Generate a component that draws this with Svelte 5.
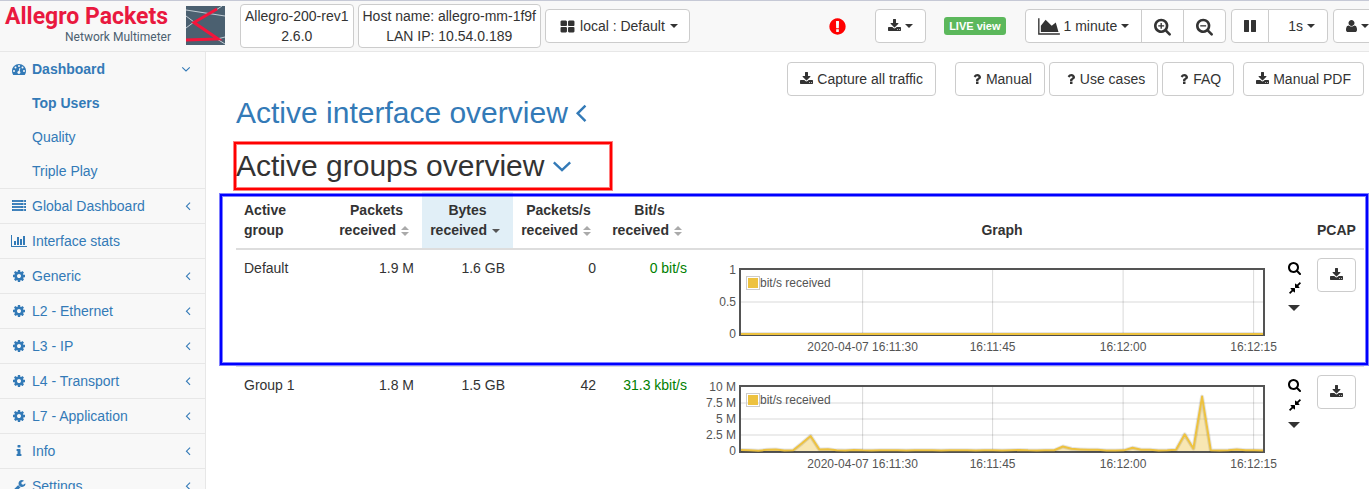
<script>
  const icons = {
    search: 'M1216 832q0-185-131.5-316.5t-316.5-131.5-316.5 131.5-131.5 316.5 131.5 316.5 316.5 131.5 316.5-131.5 131.5-316.5zm512 832q0 52-38 90t-90 38q-54 0-90-38l-343-342q-179 124-399 124-143 0-273.5-55.5t-225-150-150-225-55.5-273.5 55.5-273.5 150-225 225-150 273.5-55.5 273.5 55.5 225 150 150 225 55.5 273.5q0 220-124 399l343 343q37 37 37 90z',
    cog: 'M1152 896q0-106-75-181t-181-75-181 75-75 181 75 181 181 75 181-75 75-181zm512-109v222q0 12-8 23t-20 13l-185 28q-19 54-39 91 35 50 107 138 10 12 10 25t-9 23q-27 37-99 108t-94 71q-12 0-26-9l-138-108q-44 23-91 38-16 136-29 186-7 28-36 28h-222q-14 0-24.5-8.5t-11.5-21.5l-28-184q-49-16-90-37l-141 107q-10 9-25 9-14 0-25-11-126-114-165-168-7-10-7-23 0-12 8-23 15-21 51-66.5t54-70.5q-27-50-41-99l-183-27q-13-2-21-12.5t-8-23.5v-222q0-12 8-23t19-13l186-28q14-46 39-92-40-57-107-138-10-12-10-24 0-10 9-23 26-36 98.5-107.5t94.5-71.5q13 0 26 10l138 107q44-23 91-38 16-136 29-186 7-28 36-28h222q14 0 24.5 8.5t11.5 21.5l28 184q49 16 90 37l142-107q9-9 24-9 13 0 25 10 129 119 165 170 7 8 7 22 0 12-8 23-15 21-51 66.5t-54 70.5q26 50 41 98l183 28q13 2 21 12.5t8 23.5z',
    download: 'M1344 1344q0-26-19-45t-45-19-45 19-19 45 19 45 45 19 45-19 19-45zm256 0q0-26-19-45t-45-19-45 19-19 45 19 45 45 19 45-19 19-45zm128-224v320q0 40-28 68t-68 28h-1472q-40 0-68-28t-28-68v-320q0-40 28-68t68-28h465l135 136q58 56 136 56t136-56l136-136h464q40 0 68 28t28 68zm-325-569q17 41-14 70l-448 448q-18 19-45 19t-45-19l-448-448q-31-29-14-70 17-39 59-39h256v-448q0-26 19-45t45-19h256q26 0 45 19t19 45v448h256q42 0 59 39z',
    alert: 'M896 128q209 0 385.5 103t279.5 279.5 103 385.5-103 385.5-279.5 279.5-385.5 103-385.5-103-279.5-279.5-103-385.5 103-385.5 279.5-279.5 385.5-103zm128 1247v-190q0-14-9-23.5t-22-9.5h-192q-13 0-23 10t-10 23v190q0 13 10 23t23 10h192q13 0 22-9.5t9-23.5zm-2-344l18-621q0-12-10-18-10-8-24-8h-220q-14 0-24 8-10 6-10 18l17 621q0 10 10 17.5t24 7.5h185q14 0 23.5-7.5t10.5-17.5z',
    area: 'M2048 1536v128h-2048v-1536h128v1408h1920zm-384-1024l256 896h-1664v-576l448-576 576 576z',
    bars: 'M640 896v512h-256v-512h256zm384-512v1024h-256v-1024h256zm1024 1152v128h-2048v-1536h128v1408h1920zm-640-896v768h-256v-768h256zm384-384v1152h-256v-1152h256z',
    user: 'M1600 1405q0 120-73 189.5t-194 69.5h-874q-121 0-194-69.5t-73-189.5q0-53 3.5-103.5t14-109 26.5-108.5 43-97.5 62-81 85.5-53.5 111.5-20q9 0 42 21.5t74.5 48 108 48 133.5 21.5 133.5-21.5 108-48 74.5-48 42-21.5q61 0 111.5 20t85.5 53.5 62 81 43 97.5 26.5 108.5 14 109 3.5 103.5zm-320-893q0 159-112.5 271.5t-271.5 112.5-271.5-112.5-112.5-271.5 112.5-271.5 271.5-112.5 271.5 112.5 112.5 271.5z',
    compress: 'M896 960v448q0 26-19 45t-45 19-45-19l-144-144-332 332q-10 10-23 10t-23-10l-114-114q-10-10-10-23t10-23l332-332-144-144q-19-19-19-45t19-45 45-19h448q26 0 45 19t19 45zm755-672q0 13-10 23l-332 332 144 144q19 19 19 45t-19 45-45 19h-448q-26 0-45-19t-19-45v-448q0-26 19-45t45-19 45 19l144 144 332-332q10-10 23-10t23 10l114 114q10 10 10 23z',
    question: 'M1088 1256v240q0 16-12 28t-28 12h-240q-16 0-28-12t-12-28v-240q0-16 12-28t28-12h240q16 0 28 12t12 28zm316-600q0 54-15.5 101t-35 76.5-55 59.5-57.5 43.5-61 35.5q-41 23-68.5 65t-27.5 67q0 17-12 32.5t-28 15.5h-240q-15 0-25.5-18.5t-10.5-37.5v-45q0-83 65-156.5t143-108.5q59-27 84-56t25-76q0-42-46.5-74t-107.5-32q-65 0-108 29-35 25-107 115-13 16-31 16-12 0-25-8l-164-125q-13-10-15.5-25t5.5-28q160-266 464-266 80 0 161 31t146 83 106 127.5 41 158.5z',
    info: 'M1216 1344v128q0 26-19 45t-45 19h-512q-26 0-45-19t-19-45v-128q0-26 19-45t45-19h64v-384h-64q-26 0-45-19t-19-45v-128q0-26 19-45t45-19h384q26 0 45 19t19 45v576h64q26 0 45 19t19 45zm-128-1152v192q0 26-19 45t-45 19h-256q-26 0-45-19t-19-45v-192q0-26 19-45t45-19h256q26 0 45 19t19 45z',
    wrench: 'M448 1472q0-26-19-45t-45-19-45 19-19 45 19 45 45 19 45-19 19-45zm644-420l-682 682q-37 37-90 37-52 0-91-37l-106-108q-38-36-38-90 0-53 38-91l681-681q39 98 114.5 173.5t173.5 114.5zm634-435q0 39-23 106-47 134-164.5 217.5t-258.5 83.5q-185 0-316.5-131.5t-131.5-316.5 131.5-316.5 316.5-131.5q58 0 121.5 16.5t107.5 46.5q16 11 16 28t-16 28l-293 169v224l193 107q5-3 79-48.5t135.5-81 70.5-35.5q15 0 23.5 10t8.5 25z',
    pause: 'M1664 192v1408q0 26-19 45t-45 19h-512q-26 0-45-19t-19-45v-1408q0-26 19-45t45-19h512q26 0 45 19t19 45zm-896 0v1408q0 26-19 45t-45 19h-512q-26 0-45-19t-19-45v-1408q0-26 19-45t45-19h512q26 0 45 19t19 45z',
    grid: 'M832 1088v384q0 52-38 90t-90 38h-512q-52 0-90-38t-38-90v-384q0-52 38-90t90-38h512q52 0 90 38t38 90zm0-768v384q0 52-38 90t-90 38h-512q-52 0-90-38t-38-90v-384q0-52 38-90t90-38h512q52 0 90 38t38 90zm896 768v384q0 52-38 90t-90 38h-512q-52 0-90-38t-38-90v-384q0-52 38-90t90-38h512q52 0 90 38t38 90zm0-768v384q0 52-38 90t-90 38h-512q-52 0-90-38t-38-90v-384q0-52 38-90t90-38h512q52 0 90 38t38 90z',
    dash: 'M1792 1152q0 261-141 483-19 29-54 29h-1402q-35 0-54-29-141-221-141-483 0-182 71-348t191-286 286-191 348-71 348 71 286 191 191 286 71 348z',
    server: 'M0 128h1792v256h-1792zM0 512h1792v256h-1792zM0 896h1792v256h-1792zM0 1280h1792v256h-1792z'
  };

  // horizontal extent of the glyphs that do not fill the 1792-unit box
  const extents = {
    area: [0, 2048],
    bars: [0, 2048],
    search: [64, 1664],
    download: [64, 1664],
    pause: [128, 1536],
    user: [192, 1408]
  };

  const menu = [
    { icon: 'server', label: 'Global Dashboard', open: true },
    { icon: 'bars', label: 'Interface stats', open: false },
    { icon: 'cog', label: 'Generic', open: true },
    { icon: 'cog', label: 'L2 - Ethernet', open: true },
    { icon: 'cog', label: 'L3 - IP', open: true },
    { icon: 'cog', label: 'L4 - Transport', open: true },
    { icon: 'cog', label: 'L7 - Application', open: true },
    { icon: 'info', label: 'Info', open: true },
    { icon: 'wrench', label: 'Settings', open: true }
  ];

  const columns = [
    ['Packets', 'received'],
    ['Bytes', 'received'],
    ['Packets/s', 'received'],
    ['Bit/s', 'received']
  ];

  // one sample per second, in Mbit/s
  const traffic = [
    0.15, 0.1, 0.05, 0.18, 0.22, 0.08, 0.12, 1.2, 2.35, 0.25, 0.28, 0.1, 0.08, 0.15, 0.1, 0.08,
    0.1, 0.1, 0.12, 0.06, 0.12, 0.12, 0.1, 0.06, 0.1, 0.12, 0.1, 0.06, 0.1, 0.12, 0.06, 0.1,
    0.16, 0.1, 0.08, 0.1, 0.12, 0.7, 0.35, 0.25, 0.18, 0.2, 0.08, 0.06, 0.1, 0.5, 0.2, 0.2, 0.08,
    0.12, 0.2, 2.6, 0.4, 8.5, 0.1, 0.08, 0.1, 0.25, 0.12, 0.1, 0.06
  ];

  const rows = [
    { name: 'Default', cells: ['1.9 M', '1.6 GB', '0'], rate: '0 bit/s', ticks: ['1', '0.5', '0'], data: traffic.map(() => 0) },
    { name: 'Group 1', cells: ['1.8 M', '1.5 GB', '42'], rate: '31.3 kbit/s', ticks: ['10 M', '7.5 M', '5 M', '2.5 M', '0'], data: traffic }
  ];

  const times = [
    { at: 23.3, text: '2020-04-07 16:11:30' },
    { at: 48.2, text: '16:11:45' },
    { at: 73.2, text: '16:12:00' },
    { at: 98.2, text: '16:12:15' }
  ];

  const line = (data) => data.map((v, i) => `${((i * 100) / (data.length - 1)).toFixed(2)},${(100 - v * 10).toFixed(2)}`).join(' ');
</script>

{#snippet icon(name, size = 14)}
  {@const box = extents[name] ?? [0, 1792]}
  <svg class="icon" width={Math.round((size * box[1]) / 1792)} height={size} viewBox="{box[0]} 0 {box[1]} 1792" aria-hidden="true">
    <path d={icons[name]} fill="currentColor" />
    {#if name === 'dash'}
      <g fill="#f8f8f8">
        <circle cx="256" cy="1152" r="128" /><circle cx="448" cy="704" r="128" />
        <circle cx="896" cy="512" r="128" /><circle cx="1344" cy="704" r="128" />
        <circle cx="1536" cy="1152" r="128" /><circle cx="885" cy="1344" r="190" />
        <path d="M830 1260L945 790q20-48 70-38t45 66L950 1290z" />
      </g>
    {:else if name === 'server'}
      <g fill="#f8f8f8">
        <path d="M128 224h1024v64H128zM128 608h1024v64H128zM128 992h1024v64H128zM128 1376h1024v64H128z" opacity=".3" />
        <path d="M1408 192h160v128h-160zM1408 576h160v128h-160zM1408 960h160v128h-160zM1408 1344h160v128h-160z" />
      </g>
    {/if}
  </svg>
{/snippet}

{#snippet zoomIcon(plus)}
  <svg class="icon" width="17" height="19" viewBox="64 0 1664 1792" aria-hidden="true">
    <path d={icons.search} fill="currentColor" />
    <path d={plus ? 'M480 768h224V544h128v224h224v128H832v224H704V896H480z' : 'M480 768h576v128H480z'} fill="currentColor" />
  </svg>
{/snippet}

{#snippet angle(dir, size)}
  <svg class="icon" width={size} height={size} viewBox="0 0 14 14" fill="none" stroke="currentColor" stroke-width="1.3" aria-hidden="true">
    <path d={dir === 'left' ? 'M9.4 3L5.2 7.2L9.4 11.4' : 'M2.6 5L7 9.2L11.4 5'} />
  </svg>
{/snippet}

<div class="app">
  <header>
    <a class="brand" href="#home">
      <span class="brand-text">
        <span class="brand-name">Allegro Packets</span>
        <span class="brand-sub">Network Multimeter</span>
      </span>
      <svg width="39" height="39" viewBox="0 0 39 39" aria-hidden="true">
        <rect width="39" height="39" fill="#4b6070" />
        <g fill="none" stroke="#c3cdd4" stroke-width="1">
          <path d="M0 4L39 10M30 4L36 0M0 10L8 16L0 22M31 33L39 38M31 33L39 31" />
        </g>
        <path d="M31 3L8 16.500L32 33L0 34" fill="none" stroke="#f5153b" stroke-width="3" />
      </svg>
    </a>
    <div class="facts">
      <div class="fact">Allegro-200-rev1<br />2.6.0</div>
      <div class="fact">Host name: allegro-mm-1f9f<br />LAN IP: 10.54.0.189</div>
      <button class="btn scope">{@render icon('grid', 15)}<span>local : Default</span><i class="caret"></i></button>
    </div>
    <div class="tools">
      <span class="alert">{@render icon('alert', 19)}</span>
      <button class="btn capture" aria-label="Capture">{@render icon('download')}<i class="caret"></i></button>
      <span class="live">LIVE view</span>
      <div class="group">
        <button class="btn">{@render icon('area', 19)}<span>1 minute</span><i class="caret"></i></button>
        <button class="btn" aria-label="Zoom in">{@render zoomIcon(true)}</button>
        <button class="btn" aria-label="Zoom out">{@render zoomIcon(false)}</button>
      </div>
      <div class="group">
        <button class="btn" aria-label="Pause">{@render icon('pause')}</button>
        <button class="btn interval"><span>1s</span><i class="caret"></i></button>
      </div>
      <button class="btn" aria-label="Account">{@render icon('user')}<i class="caret"></i></button>
    </div>
  </header>

  <div class="body">
    <nav>
      <ul>
        <li>
          <a class="strong" href="#dashboard"><span class="fw">{@render icon('dash')}</span><span class="label">Dashboard</span>{@render angle('down', 12)}</a>
          <ul class="sub">
            <li><a class="strong" href="#top-users">Top Users</a></li>
            <li><a href="#quality">Quality</a></li>
            <li><a href="#triple-play">Triple Play</a></li>
          </ul>
        </li>
        {#each menu as item}
          <li>
            <a href="#{item.icon}"><span class="fw">{@render icon(item.icon)}</span><span class="label">{item.label}</span>{#if item.open}{@render angle('left', 12)}{/if}</a>
          </li>
        {/each}
      </ul>
    </nav>

    <main>
      <div class="actions">
        <button class="btn">{@render icon('download')}<span>Capture all traffic</span></button>
        <div class="help">
          {#each ['Manual', 'Use cases', 'FAQ'] as label}
            <button class="btn tight"><span class="fw">{@render icon('question')}</span><span>{label}</span></button>
          {/each}
        </div>
        <button class="btn">{@render icon('download')}<span>Manual PDF</span></button>
      </div>

      <h2><a href="#interfaces">Active interface overview{@render angle('left', 26)}</a></h2>
      <h2 class="marked">Active groups overview<a href="#groups" aria-label="Collapse">{@render angle('down', 26)}</a></h2>

      <div class="table-wrap">
        <table>
          <thead>
            <tr>
              <th class="name">Active<br />group</th>
              {#each columns as [top, bottom], i}
                <th class="num" class:sorted={i === 1}>
                  {top}<br />{bottom}
                  <svg class="sort" width="14" height="12" viewBox="0 0 14 12" aria-hidden="true">
                    {#if i === 1}
                      <path d="M1 4h8l-4 4z" fill="#555" />
                    {:else}
                      <path d="M1 5l4-4 4 4zM1 7h8l-4 4z" fill="#aaa" />
                    {/if}
                  </svg>
                </th>
              {/each}
              <th class="graph">Graph</th>
              <th class="pcap">PCAP</th>
            </tr>
          </thead>
          <tbody>
            {#each rows as row}
              <tr>
                <td>{row.name}</td>
                {#each row.cells as cell}<td class="value">{cell}</td>{/each}
                <td class="value rate">{row.rate}</td>
                <td>
                  <div class="chart">
                    <div class="y-axis">{#each row.ticks as t}<span>{t}</span>{/each}</div>
                    <div class="plot-col">
                      <div class="plot">
                        <svg viewBox="0 0 100 100" preserveAspectRatio="none" aria-hidden="true">
                          {#each row.ticks.slice(1, -1) as _, i}
                            {@const y = ((i + 1) * 100) / (row.ticks.length - 1)}
                            <path class="gridline" d="M0 {y}H100" />
                          {/each}
                          {#each times as t}<path class="gridline" d="M{t.at} 0V100" />{/each}
                          <polygon points="0,100 {line(row.data)} 100,100" fill="#edc240" fill-opacity=".4" />
                          <polyline class="shade" points={line(row.data)} />
                          <polyline class="series" points={line(row.data)} />
                        </svg>
                        <div class="legend"><i></i>bit/s received</div>
                      </div>
                      <div class="x-axis">{#each times as t}<span style="left: {t.at}%">{t.text}</span>{/each}</div>
                    </div>
                    <div class="chart-tools">
                      <button aria-label="Inspect">{@render icon('search')}</button>
                      <button aria-label="Shrink">{@render icon('compress')}</button>
                      <button class="more" aria-label="More"><i class="caret big"></i></button>
                    </div>
                  </div>
                </td>
                <td><button class="btn" aria-label="Download PCAP of {row.name}">{@render icon('download')}</button></td>
              </tr>
            {/each}
          </tbody>
        </table>
        <div class="highlight"></div>
      </div>
    </main>
  </div>
</div>

<style>
  :global(body) { margin: 0; background: #fff; }
  .app, .app *, .app *::after { box-sizing: border-box; }
  .app {
    height: 100vh;
    display: flex;
    flex-direction: column;
    overflow: hidden;
    color: #333;
    font: 14px/20px "Liberation Sans", Arial, sans-serif;
  }
  a { color: #337ab7; text-decoration: none; }
  ul { list-style: none; margin: 0; padding: 0; }
  .icon { display: block; flex: none; }
  button { font: inherit; color: inherit; margin: 0; }

  .btn {
    display: inline-flex;
    align-items: center;
    justify-content: center;
    gap: 4px;
    height: 34px;
    padding: 0 12px;
    border: 1px solid #ccc;
    border-radius: 4px;
    background: #fff;
    white-space: nowrap;
  }
  .tight { gap: 0; }
  .caret { border: 4px solid transparent; border-top-color: currentColor; border-bottom: 0; }
  .big { border-width: 6px 6px 0; }
  .fw { width: 18px; flex: none; display: flex; justify-content: center; }

  header {
    flex: none;
    display: flex;
    align-items: center;
    height: 52px;
    background: #f8f8f8;
    border-top: 1px solid #c6c9d6;
    border-bottom: 1px solid #e7e7e7;
  }
  .brand { display: flex; gap: 15px; padding-left: 5px; margin-right: 15px; }
  .brand-text { width: 166px; display: flex; flex-direction: column; white-space: nowrap; }
  .brand-name { font: bold 23px/22px Roboto, sans-serif; color: #e9193f; }
  .brand-sub { align-self: flex-end; font: 12px/18px Roboto, sans-serif; color: #4b6070; }
  .facts { display: flex; align-items: center; gap: 4px; }
  .fact {
    height: 44px;
    padding: 1px 4px;
    border: 1px solid #ccc;
    border-radius: 4px;
    background: #fff;
    text-align: center;
    white-space: nowrap;
  }
  .scope { padding: 0 11px 0 14px; gap: 5px; }
  .tools { display: flex; align-items: center; margin-left: auto; margin-right: -13px; }
  .alert { color: #f00; margin-right: 28px; }
  .capture { margin-right: 18px; }
  .live {
    margin-right: 19px;
    padding: 0 5px;
    border-radius: 3px;
    background: #5cb85c;
    color: #fff;
    font-size: 11px;
    font-weight: bold;
    line-height: 18px;
    white-space: nowrap;
  }
  .group { display: flex; margin-right: 5px; }
  .group .btn:not(:first-child) { margin-left: -1px; border-top-left-radius: 0; border-bottom-left-radius: 0; }
  .group .btn:not(:last-child) { border-top-right-radius: 0; border-bottom-right-radius: 0; }
  .group .interval { padding-left: 19px; }

  .body { flex: 1; min-height: 0; display: flex; }
  nav { flex: none; width: 206px; background: #f8f8f8; border-right: 1px solid #e7e7e7; overflow: hidden; }
  nav > ul > li { border-bottom: 1px solid #e7e7e7; }
  nav a { display: flex; align-items: center; gap: 4px; height: 34px; padding: 0 11px 0 10px; }
  .label { flex: 1; }
  .sub a { padding-left: 32px; }
  .strong { font-weight: bold; }
  nav a.strong { padding-right: 13px; }

  main { flex: 1; min-width: 0; padding: 10px 5px 0 30px; }
  .actions { display: flex; justify-content: flex-end; gap: 9px; }
  .help { display: flex; gap: 4px; margin-left: 10px; }
  h2 { display: flex; align-items: center; margin: 0 0 20px; font-size: 30px; line-height: 33px; font-weight: normal; }
  h2 a { display: flex; align-items: center; }
  .marked { position: relative; margin-bottom: 10px; gap: 5px; }
  .marked::after, .highlight { content: ""; position: absolute; pointer-events: none; }
  .marked::after {
    left: -2px;
    top: -7px;
    width: 378px;
    height: 48px;
    border: 2px solid #f00;
    box-shadow: 0 0 0 1px rgba(255, 0, 0, 0.5), inset 0 0 0 1px rgba(255, 0, 0, 0.5);
  }
  .table-wrap { position: relative; }
  .highlight {
    top: 2px;
    left: -16px;
    right: -4px;
    height: 171px;
    border: 2px solid #00f;
    box-shadow: 0 0 0 1px rgba(0, 0, 255, 0.5), inset 0 0 0 1px rgba(0, 0, 255, 0.5);
  }

  table { width: 100%; table-layout: fixed; border-collapse: separate; border-spacing: 0; }
  th, td { padding: 8px; vertical-align: top; text-align: left; }
  th { border-bottom: 2px solid #ddd; vertical-align: bottom; white-space: nowrap; }
  tbody tr + tr td { border-top: 1px solid #ddd; }
  .name { width: 95px; }
  .num { width: 91px; text-align: center; }
  .sorted { background: #e1eff7; background-clip: padding-box; }
  .sort { vertical-align: -2px; }
  .graph { text-align: center; }
  .pcap { width: 55px; }
  .value { text-align: right; white-space: nowrap; }
  .rate { color: #008000; }

  .chart { display: flex; height: 100px; padding-top: 10px; color: #545454; font-size: 12px; line-height: 14px; }
  .y-axis {
    width: 36px;
    height: 78px;
    margin-top: -5px;
    padding-right: 3px;
    display: flex;
    flex-direction: column;
    justify-content: space-between;
    text-align: right;
    white-space: nowrap;
  }
  .plot-col { flex: 1; min-width: 0; }
  .plot { position: relative; height: 68px; border: 2px solid #545454; }
  .plot svg { display: block; width: 100%; height: 100%; overflow: visible; }
  .gridline { stroke: #545454; stroke-opacity: 0.22; stroke-width: 1px; vector-effect: non-scaling-stroke; }
  .series, .shade { fill: none; stroke: #edc240; stroke-width: 2px; stroke-linejoin: round; vector-effect: non-scaling-stroke; }
  .shade { stroke: #000; stroke-opacity: 0.1; stroke-width: 4px; }
  .legend { position: absolute; left: 5px; top: 6px; display: flex; align-items: center; }
  .legend i { width: 14px; height: 14px; border: 1px solid #ccc; padding: 1px; background: #edc240 content-box; }
  .x-axis { position: relative; height: 14px; margin: 4px 2px 0; }
  .x-axis span { position: absolute; transform: translateX(-50%); white-space: nowrap; }
  .chart-tools { width: 13px; margin: -10px 0 0 23px; display: flex; flex-direction: column; color: #000; }
  .chart-tools button {
    display: flex;
    align-items: center;
    height: 20px;
    padding: 0;
    border: 0;
    background: none;
  }
  .chart-tools .more { color: #333; }
</style>
